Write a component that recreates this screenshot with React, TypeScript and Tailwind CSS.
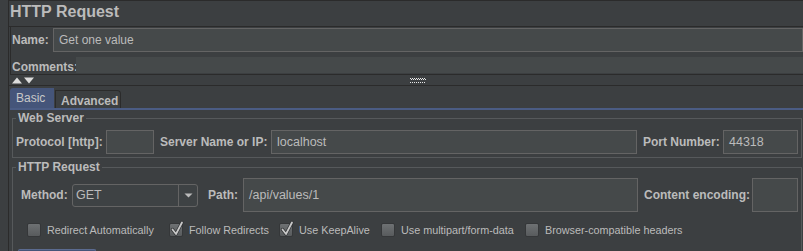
import React from "react";

const FONT = { fontFamily: '"Liberation Sans", Arial, sans-serif' };

function Field({ className = "", children }: { className?: string; children?: React.ReactNode }) {
  return (
    <div
      className={`flex items-center border border-[#646464] bg-[#45494a] px-[5px] text-[#bbbbbb] ${className}`}
    >
      {children}
    </div>
  );
}

function Check({ checked }: { checked?: boolean }) {
  return (
    <div className="relative w-[14px] h-[14px] shrink-0 rounded-[2px] border border-[#353739] bg-linear-to-b from-[#6e7173] to-[#585b5d]">
      {checked && (
        <svg width="14" height="16" viewBox="0 0 14 16" className="absolute left-[0px] top-[-4px]">
          <path d="M2.5 9.5 L6 14 L12 2.5" fill="none" stroke="#2f3133" strokeWidth="3.2" strokeLinecap="round" strokeLinejoin="round" />
          <path d="M2.5 9.5 L6 14 L12 2.5" fill="none" stroke="#c8c8c8" strokeWidth="1.8" strokeLinecap="round" strokeLinejoin="round" />
        </svg>
      )}
    </div>
  );
}

const OPTIONS: { label: string; checked: boolean; w: string }[] = [
  { label: "Redirect Automatically", checked: false, w: "w-[142px]" },
  { label: "Follow Redirects", checked: true, w: "w-[110px]" },
  { label: "Use KeepAlive", checked: true, w: "w-[102px]" },
  { label: "Use multipart/form-data", checked: false, w: "w-[144px]" },
  { label: "Browser-compatible headers", checked: false, w: "w-[160px]" },
];

function Dots() {
  const cells: React.ReactNode[] = [];
  for (let r = 0; r < 3; r++) {
    for (let c = 0; c < 16; c++) {
      if ((r + c) % 2 === 0) cells.push(<rect key={`${r}-${c}`} x={c} y={r * 2 - (c % 2 === 1 ? 1 : 0) + 1} width="1" height="1" fill="#e8e8e8" />);
    }
  }
  return (
    <svg width="16" height="6" viewBox="0 0 16 6" className="block">
      {cells}
    </svg>
  );
}

export default function App() {
  return (
    <div style={FONT} className="w-[803px] h-[251px] overflow-hidden bg-[#3c3f41] pl-[8px] text-[#bbbbbb]">
      <div className="h-full flex flex-col border-l border-t border-[#2b2b2b]">
        {/* Заголовок */}
        <div className="h-[26px] shrink-0 pl-[1px] pt-[3px] text-[16px] font-bold leading-[16px] border-b border-[#2b2b2b]">
          HTTP Request
        </div>

        {/* Name / Comments */}
        <div className="h-[48px] shrink-0 ml-[1px] pl-[1px] border-l border-b border-[#2b2b2b] flex flex-col">
          <div className="flex pt-[1px]">
            <div className="w-[41px] flex items-center text-[12px] font-bold">Name:</div>
            <Field className="flex-1 h-[24px] text-[12px]">Get one value</Field>
          </div>
          <div className="flex mt-[5px] h-[16px]">
            <div className="w-[64px] flex items-center text-[12px] font-bold pt-[3px]">Comments:</div>
            <div className="flex-1 bg-[#45494a]" />
          </div>
        </div>

        {/* Разделитель */}
        <div className="h-[11px] shrink-0 border-b border-[#2b2b2b] relative flex items-center">
          <svg width="24" height="7" viewBox="0 0 24 7" className="ml-[3px]">
            <polygon points="0,6.5 5,0.5 10,6.5" fill="#dcdcdc" />
            <polygon points="12,0.5 22,0.5 17,6.5" fill="#dcdcdc" />
          </svg>
          <div className="ml-[374px]">
            <Dots />
          </div>
        </div>

        {/* Вкладки */}
        <div className="shrink-0 mt-[2px] ml-[1px] flex items-end">
          <div className="w-[44px] h-[20px] rounded-tl-[3px] bg-[#45557a] pl-[6px] flex items-center text-[12px] leading-none text-[#c8c8c8]">
            Basic
          </div>
          <div className="w-[66px] h-[18px] ml-[1px] rounded-tr-[4px] border-t border-r border-l border-[#2b2b2b] pl-[5px] flex items-center text-[12px] font-bold leading-none pt-[2px]">
            Advanced
          </div>
        </div>
        <div className="shrink-0 ml-[1px] h-[2px] bg-[#4b5c84]" />

        {/* Web Server */}
        <fieldset className="shrink-0 mt-[1px] ml-[3px] mr-[1px] border border-[#56595b] pb-[3px]">
          <legend className="ml-[3px] px-[2px] text-[12px] font-bold leading-[14px]">Web Server</legend>
          <div className="flex items-center pt-[5px] text-[12px] font-bold">
            <div className="w-[3px]" />
            <div className="w-[90px]">Protocol [http]:</div>
            <Field className="w-[48px] h-[24px]" />
            <div className="w-[117px] pl-[6px]">Server Name or IP:</div>
            <Field className="flex-1 h-[24px] font-normal text-[12.5px]">localhost</Field>
            <div className="w-[86px] pl-[6px]">Port Number:</div>
            <Field className="w-[75px] h-[24px] font-normal text-[12.5px]">44318</Field>
            <div className="w-[3px]" />
          </div>
        </fieldset>

        {/* HTTP Request */}
        <fieldset className="flex-1 mt-[2px] ml-[3px] mr-[1px] border border-[#56595b] min-h-[120px]">
          <legend className="ml-[3px] px-[2px] text-[12px] font-bold leading-[14px]">HTTP Request</legend>
          <div className="flex items-center pt-[4px] text-[12px] font-bold">
            <div className="w-[8px]" />
            <div className="w-[51px]">Method:</div>
            <div className="w-[126px] h-[23px] flex rounded-[3px] border border-[#646464] bg-[#3e4244]">
              <div className="flex-1 flex items-center pl-[3px] font-normal text-[12.5px]">GET</div>
              <div className="w-[19px] border-l border-[#646464] flex items-center justify-center">
                <svg width="9" height="5" viewBox="0 0 9 5">
                  <polygon points="0.5,0.5 8.5,0.5 4.5,4.5" fill="#bbbbbb" />
                </svg>
              </div>
            </div>
            <div className="w-[45px] pl-[10px]">Path:</div>
            <Field className="w-[395px] h-[34px] font-normal text-[12.5px]">/api/values/1</Field>
            <div className="w-[114px] pl-[6px]">Content encoding:</div>
            <Field className="w-[46px] h-[34px]" />
            <div className="w-[3px]" />
          </div>

          <div className="flex items-center mt-[11px] pl-[14px] h-[14px]">
            {OPTIONS.map(o => (
              <div key={o.label} className={`flex items-center gap-[6px] shrink-0 ${o.w}`}>
                <Check checked={o.checked} />
                <span className="text-[10.8px] leading-none whitespace-nowrap">{o.label}</span>
              </div>
            ))}
          </div>

          <div className="mt-[12px] ml-[5px] w-[78px] h-[4px] rounded-t-[2px] border-t border-l border-r border-[#5b6b90] bg-[#45557a]" />
        </fieldset>
      </div>
    </div>
  );
}
